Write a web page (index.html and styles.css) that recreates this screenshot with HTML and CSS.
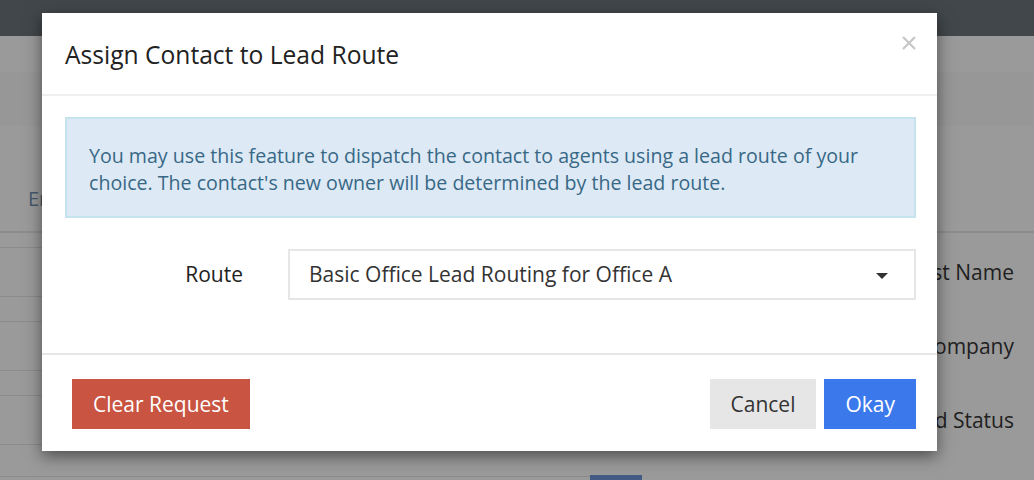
FILE: index.html
```html
<!DOCTYPE html>
<html lang="en">
<head>
<meta charset="utf-8">
<title>Assign Contact to Lead Route</title>
<link rel="stylesheet" href="styles.css">
</head>
<body>
<div class="page">
  <div class="topbar"></div>
  <div class="subbar"></div>
  <div class="band"></div>
  <div class="tabs"><span class="tab">Email</span></div>
  <div class="divider"></div>
  <div class="form">
    <div class="frow"><div class="field"></div><div class="flabel">First Name</div></div>
    <div class="frow"><div class="field"></div><div class="flabel">Company</div></div>
    <div class="frow"><div class="field"></div><div class="flabel">Lead Status</div></div>
    <div class="frow last"><div class="field"></div><div class="bluebtn"></div></div>
  </div>
</div>

<div class="modal" role="dialog">
  <div class="modal-header">
    <h4 class="modal-title">Assign Contact to Lead Route</h4>
    <span class="close" aria-label="Close">
      <svg width="14" height="14" viewBox="0 0 14 14"><path d="M1 1 L13 13 M13 1 L1 13" stroke="#c6c6c6" stroke-width="2.2" fill="none"/></svg>
    </span>
  </div>
  <div class="modal-body">
    <div class="alert">You may use this feature to dispatch the contact to agents using a lead route of your choice. The contact's new owner will be determined by the lead route.</div>
    <div class="route-row">
      <label class="route-label">Route</label>
      <div class="select"><span>Basic Office Lead Routing for Office A</span><span class="caret"></span></div>
    </div>
  </div>
  <div class="modal-footer">
    <button class="btn btn-danger">Clear Request</button>
    <div class="actions">
      <button class="btn btn-default">Cancel</button>
      <button class="btn btn-primary">Okay</button>
    </div>
  </div>
</div>
</body>
</html>
```

FILE: styles.css
```css
html, body {
  margin: 0;
  padding: 0;
}
body {
  width: 1034px;
  height: 480px;
  overflow: hidden;
  background: #9a9a9a;
  font-family: "Open Sans", "Noto Sans", sans-serif;
  position: relative;
}

/* background page (dimmed) */
.topbar {
  height: 36px;
  background: #42474b;
}
.subbar {
  height: 36px;
  background: #9a9a9a;
}
.band {
  height: 54px;
  background: #979797;
}
.tabs {
  height: 105px;
  box-sizing: border-box;
  padding: 59px 0 0 28px;
  font-size: 20px;
  line-height: 27px;
}
.tab {
  color: #45586c;
}
.divider {
  height: 2px;
  background: #8d8d8d;
}
.form {
  padding-top: 14px;
}
.frow {
  display: flex;
  height: 50px;
  margin-bottom: 24px;
}
.frow.last {
  margin-top: 31px;
  margin-bottom: 0;
  height: 4px;
}
.field {
  width: 700px;
  margin-left: -10px;
  box-sizing: border-box;
  border-top: 1px solid #8b8b8b;
  border-bottom: 1px solid #8b8b8b;
}
.frow.last .field {
  width: 600px;
  border-bottom: none;
}
.bluebtn {
  width: 52px;
  height: 5px;
  margin-top: -1px;
  background: #435a85;
}
.flabel {
  flex: 1;
  text-align: right;
  padding-right: 20px;
  font-size: 21px;
  line-height: 50px;
  color: #1f1f1f;
}

/* modal */
.modal {
  position: absolute;
  left: 42px;
  top: 13px;
  width: 895px;
  background: #fff;
  box-shadow: 0 5px 15px rgba(0, 0, 0, 0.5);
}
.modal-header {
  display: flex;
  justify-content: space-between;
  align-items: flex-start;
  padding: 25px 21px 22px 23px;
  border-bottom: 2px solid #efefef;
}
.modal-title {
  margin: 0;
  font-size: 24.6px;
  line-height: 34px;
  font-weight: 400;
  color: #222;
}
.close {
  display: block;
  width: 14px;
  height: 14px;
  margin-top: -2px;
}
.close svg {
  display: block;
}
.modal-body {
  padding: 21px 21px 53px 23px;
}
.alert {
  border: 2px solid #c6e4ee;
  background: #ddeaf5;
  color: #386886;
  padding: 23px 22px 20px;
  font-size: 19.6px;
  line-height: 27px;
}
.route-row {
  display: grid;
  grid-template-columns: 223px 1fr;
  align-items: center;
  margin-top: 31px;
}
.route-label {
  text-align: right;
  padding-right: 45px;
  font-size: 21px;
  line-height: 27px;
  color: #222;
}
.select {
  height: 51px;
  box-sizing: border-box;
  border: 2px solid #e6e6e6;
  padding: 0 26px 0 19px;
  display: flex;
  align-items: center;
  justify-content: space-between;
  font-size: 21px;
  line-height: 27px;
  color: #333;
}
.caret {
  width: 0;
  height: 0;
  border-left: 6.5px solid transparent;
  border-right: 6.5px solid transparent;
  border-top: 6px solid #333;
  margin-top: 2px;
}
.modal-footer {
  display: flex;
  justify-content: space-between;
  border-top: 2px solid #e6e6e6;
  padding: 24px 21px 22px 30px;
}
.actions {
  display: flex;
  gap: 8px;
}
.btn {
  height: 50px;
  padding: 0 21px;
  border: none;
  border-radius: 0;
  font-family: "Open Sans", "Noto Sans", sans-serif;
  font-size: 21px;
  line-height: 50px;
  cursor: pointer;
}
.btn-danger {
  background: #c85441;
  color: #fff;
}
.btn-default {
  background: #e6e6e6;
  color: #333;
}
.btn-primary {
  background: #3b78ec;
  color: #fff;
}
```
